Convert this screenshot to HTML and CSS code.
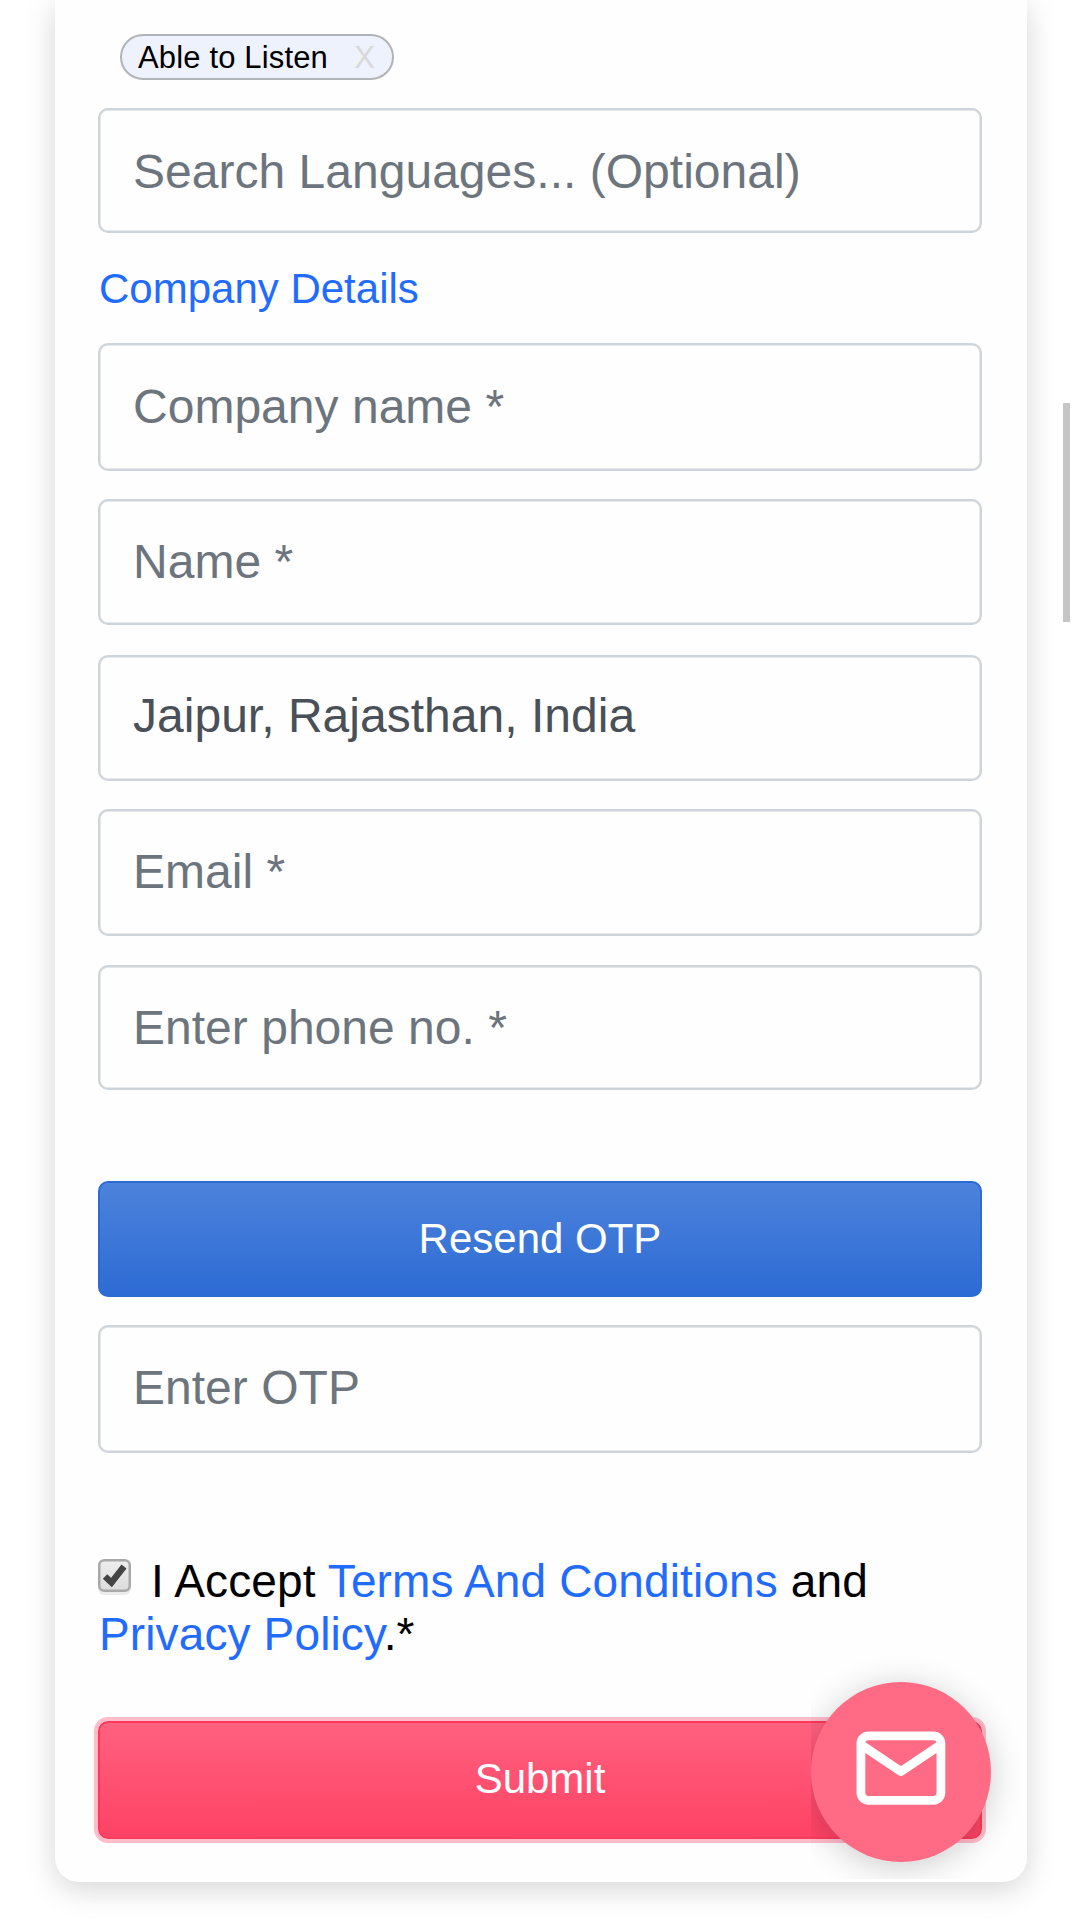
FILE: index.html
```html
<!DOCTYPE html>
<html lang="en">
<head>
<meta charset="utf-8">
<title>Company Details</title>
<link rel="stylesheet" href="styles.css">
</head>
<body>
<main class="card">
  <div class="chip"><span>Able to Listen</span><span class="chip-close">X</span></div>
  <div class="field field-search">Search Languages... (Optional)</div>
  <h2 class="section-title">Company Details</h2>
  <div class="field field-company">Company name *</div>
  <div class="field field-name">Name *</div>
  <div class="field field-city">Jaipur, Rajasthan, India</div>
  <div class="field field-email">Email *</div>
  <div class="field field-phone">Enter phone no. *</div>
  <button class="btn btn-otp" type="button">Resend OTP</button>
  <div class="field field-otp">Enter OTP</div>
  <p class="terms"><svg class="checkbox" viewBox="0 0 33 36" aria-hidden="true">
      <defs><linearGradient id="box" x1="0" y1="0" x2="0" y2="1"><stop offset="0" stop-color="#eee"/><stop offset="1" stop-color="#dcdcdc"/></linearGradient></defs>
      <rect x="0" y="3" width="33" height="33" rx="6" fill="#ececec"/>
      <rect x="1.25" y="1.25" width="30.5" height="30.5" rx="5" fill="url(#box)" stroke="#a9a9a9" stroke-width="2.5"/>
      <path d="M7 17.500L13.500 23.500L26 7.500" fill="none" stroke="#444" stroke-width="6.400"/>
    </svg>I Accept <a class="link">Terms And Conditions</a> and<br><a class="link">Privacy Policy</a>.*</p>
  <button class="btn btn-submit" type="button"><span>Submit</span></button>
</main>
<div class="fab">
  <svg class="mail" viewBox="0 0 90 74" fill="none" stroke="#fff" stroke-width="8.800" stroke-linejoin="round">
    <rect x="4.900" y="4.900" width="80" height="64.400" rx="7.500"/>
    <path d="M5.500 14L44.900 40.500L84.300 14"/>
  </svg>
</div>
<div class="scroll-thumb"></div>
</body>
</html>
```
FILE: styles.css
```css
* { box-sizing: border-box; }
html, body { height: 1920px; overflow: hidden; }
body {
  margin: 0;
  background: #fff;
  font-family: "Liberation Sans", Arial, sans-serif;
  color: #000;
}
.card {
  display: flex;
  flex-direction: column;
  align-items: stretch;
  width: 972px;
  height: 1882px;
  margin-left: 55px;
  padding: 34px 45px 0 43px;
  background: #fefefe;
  border-radius: 0 0 24px 24px;
  box-shadow: 0 7px 30px rgba(0, 0, 0, 0.17);
}
.chip {
  display: flex;
  align-items: center;
  align-self: flex-start;
  justify-content: space-between;
  width: 274px;
  height: 46px;
  margin-left: 22px;
  padding: 1px 17px 0 16px;
  border: 2px solid #b0b4b9;
  border-radius: 23px;
  background: #eef2fc;
  font-size: 31px;
  letter-spacing: 0.15px;
}
.chip-close { color: #d9d9d9; letter-spacing: 0; }
.field {
  display: flex;
  align-items: center;
  flex: none;
  height: 126px;
  padding-left: 33px;
  border: 2px solid #ced4da;
  border-radius: 10px;
  box-shadow: inset 0 0 0 0.5px #ced4da;
  font-size: 48px;
  line-height: 72px;
  letter-spacing: 0.02px;
  color: #6c757d;
}
.field-search { height: 125px; margin-top: 28px; padding-top: 2px; }
.section-title {
  height: 110px;
  margin: 0;
  font-size: 42px;
  font-weight: 400;
  line-height: 111px;
  padding-left: 1px;
  color: #216bff;
}
.field-company { height: 128px; }
.field-name { margin-top: 28px; }
.field-city { margin-top: 30px; padding-bottom: 4px; color: #495057; }
.field-email { height: 127px; margin-top: 28px; padding-bottom: 2px; }
.field-phone { height: 125px; margin-top: 29px; }
.btn {
  flex: none;
  padding: 0;
  border: 2px solid;
  border-radius: 10px;
  font: 42px "Liberation Sans", Arial, sans-serif;
  color: #fff;
}
.btn-otp {
  height: 116px;
  margin-top: 91px;
  border-color: #2d6bd4;
  background: linear-gradient(#4c82db, #2d6bd4);
}
.field-otp { height: 128px; margin-top: 28px; padding-bottom: 2px; }
.terms {
  height: 106px;
  margin: 102px 0 0;
  padding-left: 1px;
  font-size: 46px;
  line-height: 53px;
  letter-spacing: 0.13px;
  white-space: nowrap;
}
.checkbox { width: 33px; height: 36px; margin: 0 20px 0 -1px; vertical-align: 2px; }
.link { color: #216bff; }
.btn-submit {
  height: 118px;
  margin-top: 60px;
  padding-bottom: 2px;
  border-color: #fd3a5c;
  background: linear-gradient(#ff617f, #ff4265);
  box-shadow: 0 0 0 4px #ffbcca;
}
.fab {
  position: fixed;
  left: 811px;
  top: 1682px;
  display: flex;
  align-items: center;
  justify-content: center;
  width: 180px;
  height: 180px;
  padding-bottom: 9px;
  border-radius: 50%;
  background: #ff6b84;
  box-shadow: 0 5px 34px rgba(0, 0, 0, 0.2);
  clip-path: inset(-40px -40px -17px 0);
}
.mail { width: 90px; height: 74px; }
.scroll-thumb {
  position: fixed;
  left: 1063px;
  top: 403px;
  width: 7px;
  height: 219px;
  background: #c5c5c5;
}
```
